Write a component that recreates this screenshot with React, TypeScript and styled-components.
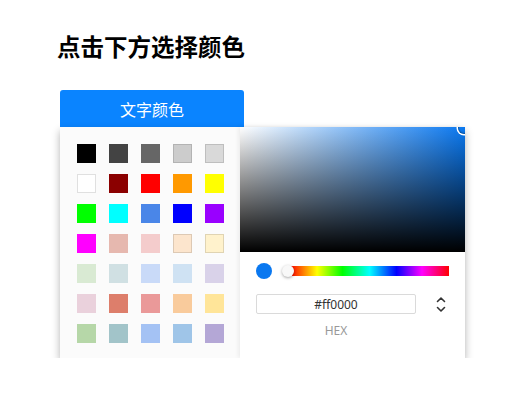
import React, { useState } from "react"
import styled, { createGlobalStyle } from "styled-components"

const SWATCHES = [
  ["#000000", "#434343", "#666666", "#cccccc", "#d9d9d9"],
  ["#ffffff", "#8b0000", "#ff0000", "#ff9900", "#ffff00"],
  ["#00ff00", "#00ffff", "#4a86e8", "#0000ff", "#9900ff"],
  ["#ff00ff", "#e6b8af", "#f4cccc", "#fce5cd", "#fff2cc"],
  ["#d9ead3", "#d0e0e3", "#c9daf8", "#cfe2f3", "#d9d2e9"],
  ["#ead1dc", "#dd7e6b", "#ea9999", "#f9cb9c", "#ffe599"],
  ["#b6d7a8", "#a2c4c9", "#a4c2f4", "#9fc5e8", "#b4a7d6"],
]

const LIGHT = ["#ffffff", "#fce5cd", "#fff2cc", "#d9d9d9", "#cccccc"]

const GlobalStyle = createGlobalStyle`
  body {
    margin: 0;
    background: #ffffff;
    font-family: "Noto Sans CJK SC", "Noto Sans", sans-serif;
  }
`

const Page = styled.div`
  padding: 28px 0 0 57px;
`

const Title = styled.h1`
  margin: 0 0 26px;
  font-size: 23.5px;
  line-height: 36px;
  font-weight: 700;
  color: #000;
`

const Wrap = styled.div`
  margin-left: 3px;
  width: 405px;
`

const TriggerButton = styled.button`
  display: block;
  width: 184px;
  height: 37px;
  border: none;
  border-radius: 3px 3px 0 0;
  background: #0a84ff;
  color: #fff;
  font-family: inherit;
  font-size: 16px;
  cursor: pointer;
`

const Popover = styled.div`
  display: flex;
  height: 231px;
  box-shadow: 0 4px 8px rgba(0, 0, 0, 0.3);
  background: #fff;
`

const SwatchPanel = styled.div`
  width: 180px;
  box-sizing: border-box;
  padding: 17px 0 0 17px;
  background: #fbfbfb;
  display: grid;
  grid-template-columns: repeat(5, 19px);
  grid-auto-rows: 19px;
  column-gap: 13px;
  row-gap: 11px;
  align-content: start;
`

const Swatch = styled.div<{ $color: string; $light: boolean }>`
  background: ${(p) => p.$color};
  box-shadow: ${(p) => (p.$light ? "inset 0 0 0 1px rgba(0,0,0,0.12)" : "none")};
`

const Picker = styled.div`
  width: 225px;
  display: flex;
  flex-direction: column;
  background: #fff;
  box-shadow: -2px 0 4px rgba(0, 0, 0, 0.06);
`

const Saturation = styled.div`
  position: relative;
  height: 125px;
  background: linear-gradient(to top, #000, rgba(0, 0, 0, 0)),
    linear-gradient(to right, #fff, #0a78f0);
  overflow: hidden;
`

const SatPointer = styled.div`
  position: absolute;
  top: -5px;
  right: -5px;
  width: 12px;
  height: 12px;
  border-radius: 50%;
  box-shadow: 0 0 0 1.5px #fff, inset 0 0 1px 1px rgba(0, 0, 0, 0.3);
`

const Controls = styled.div`
  display: flex;
  align-items: center;
  padding: 11px 16px 0 16px;
  gap: 12px;
`

const Preview = styled.div`
  width: 16px;
  height: 16px;
  border-radius: 50%;
  background: #0a78f0;
  flex: none;
`

const HueBar = styled.div`
  position: relative;
  flex: 1;
  height: 10px;
  margin-left: 6px;
  background: linear-gradient(
    to right,
    #f00 0%,
    #ff0 17%,
    #0f0 33%,
    #0ff 50%,
    #00f 67%,
    #f0f 83%,
    #f00 100%
  );
`

const HueThumb = styled.div`
  position: absolute;
  left: -8px;
  top: -1px;
  width: 12px;
  height: 12px;
  border-radius: 50%;
  background: #f8f8f8;
  box-shadow: 0 1px 3px rgba(0, 0, 0, 0.35);
`

const FieldRow = styled.div`
  display: flex;
  align-items: flex-start;
  padding: 15px 16px 0 16px;
`

const FieldCol = styled.div`
  width: 160px;
  display: flex;
  flex-direction: column;
  align-items: center;
`

const HexInput = styled.input`
  width: 160px;
  height: 20px;
  box-sizing: border-box;
  border: 1px solid #dadada;
  border-radius: 2px;
  text-align: center;
  font-family: "Noto Sans", sans-serif;
  font-size: 12px;
  color: #333;
  outline: none;
  padding: 0;
`

const FieldLabel = styled.span`
  margin-top: 8px;
  font-family: "Noto Sans", sans-serif;
  font-size: 12px;
  color: #999;
`

const Toggle = styled.div`
  margin-left: 18px;
  margin-top: 2px;
  width: 14px;
  display: flex;
  justify-content: center;
`

function Arrows() {
  return (
    <svg width="12" height="17" viewBox="0 0 12 17" fill="none" stroke="#333" strokeWidth="1.6" strokeLinecap="round" strokeLinejoin="round">
      <path d="M2.5 5.5 L6 2 L9.5 5.5" />
      <path d="M2.5 11.5 L6 15 L9.5 11.5" />
    </svg>
  )
}

export default function App() {
  const [hex, setHex] = useState("#ff0000")
  return (
    <Page>
      <GlobalStyle />
      <Title>点击下方选择颜色</Title>
      <Wrap>
        <TriggerButton>文字颜色</TriggerButton>
        <Popover>
          <SwatchPanel>
            {SWATCHES.flat().map((c, i) => (
              <Swatch key={i} $color={c} $light={LIGHT.includes(c)} />
            ))}
          </SwatchPanel>
          <Picker>
            <Saturation>
              <SatPointer />
            </Saturation>
            <Controls>
              <Preview />
              <HueBar>
                <HueThumb />
              </HueBar>
            </Controls>
            <FieldRow>
              <FieldCol>
                <HexInput value={hex} onChange={(e) => setHex(e.target.value)} />
                <FieldLabel>HEX</FieldLabel>
              </FieldCol>
              <Toggle>
                <Arrows />
              </Toggle>
            </FieldRow>
          </Picker>
        </Popover>
      </Wrap>
    </Page>
  )
}
